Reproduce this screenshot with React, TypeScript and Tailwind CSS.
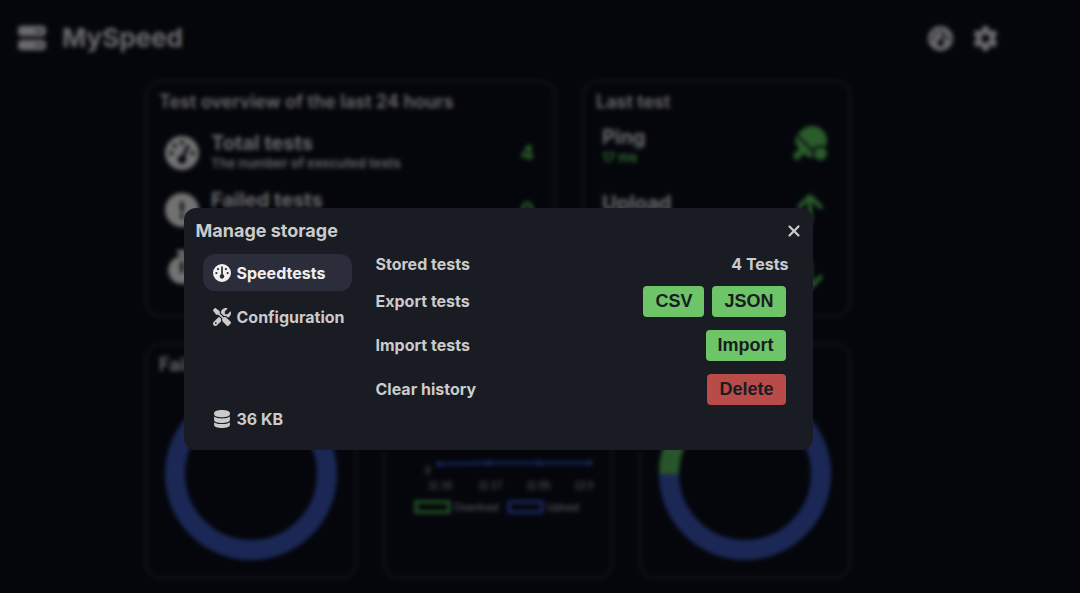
import React from 'react';
import type { IconType } from 'react-icons';
import {
  FaServer,
  FaGauge,
  FaGaugeHigh,
  FaGear,
  FaCircleExclamation,
  FaStopwatch,
  FaTableTennisPaddleBall,
  FaArrowUp,
  FaArrowDown,
  FaScrewdriverWrench,
  FaDatabase,
  FaXmark,
} from 'react-icons/fa6';

interface OverviewItem {
  icon: IconType;
  title: string;
  description: string;
  value: string;
}

const overview: OverviewItem[] = [
  { icon: FaGaugeHigh, title: 'Total tests', description: 'The number of executed tests', value: '4' },
  { icon: FaCircleExclamation, title: 'Failed tests', description: '', value: '0' },
  { icon: FaStopwatch, title: '', description: '', value: '' },
];

const lastTest = [
  { icon: FaTableTennisPaddleBall, title: 'Ping', value: '17 ms' },
  { icon: FaArrowUp, title: 'Upload', value: '' },
  { icon: FaArrowDown, title: '', value: '' },
];

interface CardProps {
  title?: string;
  className: string;
  children: React.ReactNode;
}

const Card: React.FC<CardProps> = ({ title, className, children }) => (
  <section className={`rounded-2xl border-2 border-[#14161c] px-3 pt-2 ${className}`}>
    <h2 className="h-6 text-lg leading-6 font-semibold">{title}</h2>
    {children}
  </section>
);

const Donut: React.FC<{ share: number }> = ({ share }) => {
  const length = 2 * Math.PI * 76;
  return (
    <svg viewBox="0 0 172 172" className="mx-auto mt-[11px] h-[172px] w-[172px]" fill="none" strokeWidth="20">
      <circle cx="86" cy="86" r="76" stroke="#1b2856" />
      {share > 0 && (
        <circle
          cx="86"
          cy="86"
          r="76"
          stroke="#28552a"
          strokeDasharray={`${length * share} ${length}`}
          transform="rotate(180 86 86)"
        />
      )}
    </svg>
  );
};

const SpeedChart: React.FC = () => (
  <svg
    viewBox="0 0 196 140"
    className='mx-auto h-[140px] w-[196px] font-["Liberation_Sans",sans-serif]'
    fontSize="10"
    fill="#5c5d60"
  >
    <path d="M39 87 89 86 139 86 190 86" stroke="#16245a" strokeWidth="3" fill="none" />
    <g fill="#16245a">
      <circle cx="39" cy="87" r="3" />
      <circle cx="89" cy="86" r="3" />
      <circle cx="139" cy="86" r="3" />
      <circle cx="190" cy="86" r="3" />
    </g>
    <text x="25" y="97">0</text>
    <text x="28" y="112">11:16</text>
    <text x="78" y="112">11:17</text>
    <text x="126" y="112">11:55</text>
    <text x="174" y="112">12:0</text>
    <rect x="16" y="125" width="33" height="10" stroke="#245a28" strokeWidth="3" fill="none" />
    <text x="54" y="134">Download</text>
    <rect x="109" y="125" width="33" height="10" stroke="#1a2a68" strokeWidth="3" fill="none" />
    <text x="147" y="134">Upload</text>
  </svg>
);

const Dashboard: React.FC = () => (
  <div className="min-h-screen pb-3">
    <header className="flex h-20 items-center justify-between pr-[82px] pb-1 pl-[18px]">
      <div className="flex items-center gap-4">
        <FaServer className="h-7 w-7" />
        <h1 className="text-[26px] leading-8 font-bold">MySpeed</h1>
      </div>
      <div className="flex items-center gap-5">
        <button type="button" aria-label="Run speedtest"><FaGaugeHigh className="h-[25px] w-[25px]" /></button>
        <button type="button" aria-label="Settings"><FaGear className="h-[25px] w-[25px]" /></button>
      </div>
    </header>

    <main className="pr-[84px]">
      <div className="mx-auto flex max-w-[706px] flex-col gap-[26px]">
        <div className="flex gap-[26px]">
          <Card title="Test overview of the last 24 hours" className="h-[237px] flex-1">
            <ul className="mt-2.5 pr-1 pl-1.5">
              {overview.map((item, index) => (
                <li key={index} className="flex h-[57px] items-center">
                  <item.icon className="h-[34px] w-[34px] text-[#727272]" />
                  <div className="ml-3 flex-1 pb-0.5">
                    <h3 className="h-6 text-xl leading-6 font-bold">{item.title}</h3>
                    <p className="h-[18px] text-[13px] leading-4 font-bold text-[#5c5d60]">{item.description}</p>
                  </div>
                  <span className="mr-1 text-xl font-bold text-[#2c622e]">{item.value}</span>
                </li>
              ))}
            </ul>
          </Card>
          <Card title="Last test" className="h-[237px] w-[269px]">
            <ul className="-mt-1 pr-2.5 pl-1.5">
              {lastTest.map((item, index) => (
                <li key={index} className="flex h-[66px] items-center justify-between">
                  <div className="pt-1">
                    <h3 className="h-6 text-xl leading-6 font-bold">{item.title}</h3>
                    <p className="h-4 text-[13px] leading-4 font-bold text-[#2c622e]">{item.value}</p>
                  </div>
                  <item.icon className="h-[34px] w-[34px] text-[#2a5c2c]" />
                </li>
              ))}
            </ul>
          </Card>
        </div>

        <div className="flex gap-[26px]">
          <Card title="Failed tests" className="h-[236px] w-[212px]">
            <Donut share={0} />
          </Card>
          <Card className="h-[236px] flex-1">
            <SpeedChart />
          </Card>
          <Card className="h-[236px] w-[212px]">
            <Donut share={0.25} />
          </Card>
        </div>
      </div>
    </main>
  </div>
);

const actionClass = 'h-[31px] rounded px-3 font-["Liberation_Sans",sans-serif] text-lg leading-6 font-bold text-[#191c23]';

const StorageDialog: React.FC = () => (
  <div
    role="dialog"
    aria-labelledby="storage-title"
    className="w-full max-w-[629px] rounded-xl bg-[#191c23] px-3 pt-3 pb-4 text-base font-bold text-[#cbcbcc]"
  >
    <div className="flex h-[22px] items-center justify-between">
      <h2 id="storage-title" className="text-lg leading-6">Manage storage</h2>
      <button type="button" aria-label="Close"><FaXmark className="h-[18px] w-[14px]" /></button>
    </div>

    <div className="mt-3 flex gap-6">
      <div className="flex w-[156px] flex-col justify-between pl-[7px]">
        <nav className="flex flex-col gap-[7px]">
          <button type="button" className="flex h-[37px] items-center gap-1.5 rounded-xl bg-[#2c2d3a] px-2.5 text-[#f0f0f0]">
            <FaGauge className="h-[18px] w-[18px] shrink-0" />
            Speedtests
          </button>
          <button type="button" className="flex h-[37px] items-center gap-1.5 rounded-xl px-2.5">
            <FaScrewdriverWrench className="h-[18px] w-[18px] shrink-0" />
            Configuration
          </button>
        </nav>
        <div className="flex h-[30px] items-center gap-1.5 px-2.5">
          <FaDatabase className="h-[18px] w-[18px] shrink-0" />
          36 KB
        </div>
      </div>

      <div className="flex h-[180px] flex-1 flex-col">
        <div className="flex h-5 items-center justify-between pr-3">
          <span>Stored tests</span>
          <span>4 Tests</span>
        </div>
        <div className="mt-[5px] flex flex-col pr-[15px]">
          <div className="flex h-11 items-center justify-between">
            <span>Export tests</span>
            <div className="flex gap-2">
              <button type="button" className={`${actionClass} bg-[#6dc568]`}>CSV</button>
              <button type="button" className={`${actionClass} bg-[#6dc568]`}>JSON</button>
            </div>
          </div>
          <div className="flex h-11 items-center justify-between">
            <span>Import tests</span>
            <button type="button" className={`${actionClass} bg-[#6dc568]`}>Import</button>
          </div>
          <div className="flex h-11 items-center justify-between">
            <span>Clear history</span>
            <button type="button" className={`${actionClass} bg-[#b94c49]`}>Delete</button>
          </div>
        </div>
      </div>
    </div>
  </div>
);

const App: React.FC = () => {
  return (
    <div className='min-h-screen bg-[#04060b] font-["Inter",sans-serif] text-[#6a6a6c]'>
      <Dashboard />
      <div className="fixed inset-0 flex items-center justify-center pt-[65px] pr-[84px] backdrop-blur-[2px]">
        <StorageDialog />
      </div>
    </div>
  );
};

export default App;
